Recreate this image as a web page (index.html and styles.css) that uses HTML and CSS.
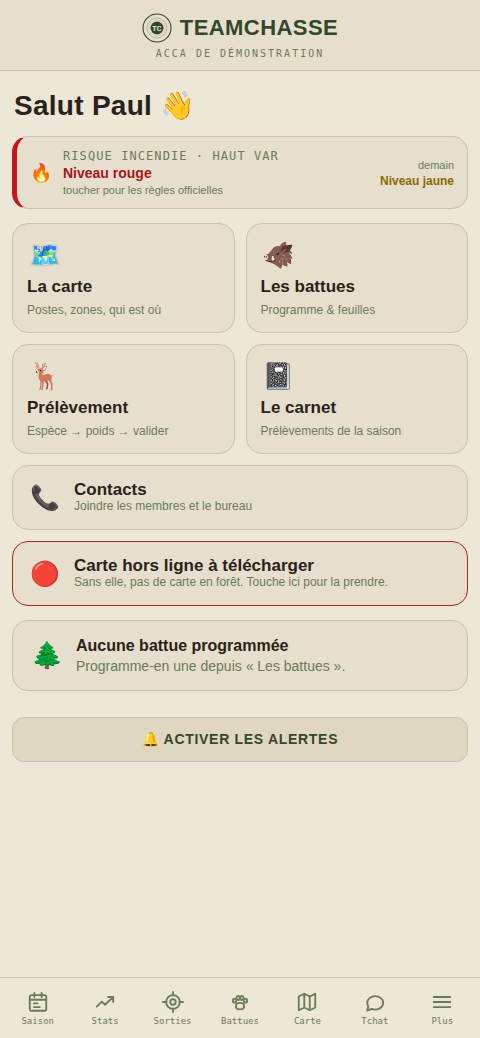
FILE: index.html
```html
<!DOCTYPE html>
<html lang="fr">
<head>
  <meta charset="UTF-8" />
  <meta name="viewport" content="width=device-width, initial-scale=1.0" />
  <title>TeamChasse</title>
  <link rel="stylesheet" href="styles.css">
</head>
<body>
  <header class="topbar">
    <div class="brand">
      <svg class="logo" viewBox="0 0 30 30" fill="none" aria-hidden="true">
        <circle cx="15" cy="15" r="14" stroke="#34472b" stroke-width="1.1" />
        <circle cx="15" cy="15" r="10" stroke="#a3a68d" stroke-width=".7" />
        <circle cx="15" cy="15" r="8" stroke="#cdc4a6" stroke-width=".6" />
        <circle cx="15" cy="15" r="6.5" fill="#34472b" />
        <text x="15" y="17.5" text-anchor="middle" fill="#ede7d8">TC</text>
      </svg>
      <span class="brand-name">TEAMCHASSE</span>
    </div>
    <div class="club">ACCA DE DÉMONSTRATION</div>
  </header>

  <main>
    <h1>Salut Paul 👋</h1>

    <a class="card fire" href="#risque">
      <span class="fire-icon">🔥</span>
      <span class="fire-today">
        <span class="fire-label">RISQUE INCENDIE · HAUT VAR</span>
        <strong>Niveau rouge</strong>
        <small>toucher pour les règles officielles</small>
      </span>
      <span class="fire-next">
        <small>demain</small>
        <strong>Niveau jaune</strong>
      </span>
    </a>

    <div class="tiles">
      <a class="card tile" href="#carte">
        <span class="emoji">🗺️</span>
        <strong>La carte</strong>
        <small>Postes, zones, qui est où</small>
      </a>
      <a class="card tile" href="#battues">
        <span class="emoji">🐗</span>
        <strong>Les battues</strong>
        <small>Programme &amp; feuilles</small>
      </a>
      <a class="card tile" href="#prelevement">
        <span class="emoji">🦌</span>
        <strong>Prélèvement</strong>
        <small>Espèce → poids → valider</small>
      </a>
      <a class="card tile" href="#carnet">
        <span class="emoji">📓</span>
        <strong>Le carnet</strong>
        <small>Prélèvements de la saison</small>
      </a>
      <a class="card tile wide" href="#contacts">
        <span class="emoji">📞</span>
        <span class="text">
          <strong>Contacts</strong>
          <small>Joindre les membres et le bureau</small>
        </span>
      </a>
      <a class="card tile wide offline" href="#hors-ligne">
        <span class="emoji">🔴</span>
        <span class="text">
          <strong>Carte hors ligne à télécharger</strong>
          <small>Sans elle, pas de carte en forêt. Touche ici pour la prendre.</small>
        </span>
      </a>
    </div>

    <section class="card next-hunt">
      <span class="emoji">🌲</span>
      <div>
        <h2>Aucune battue programmée</h2>
        <p>Programme-en une depuis « Les battues ».</p>
      </div>
    </section>

    <button class="alerts" type="button">🔔 ACTIVER LES ALERTES</button>
  </main>

  <nav class="tabs">
    <a href="#saison">
      <svg viewBox="0 0 24 24"><rect x="3" y="4.5" width="18" height="17" rx="2" /><path d="M8 2v4.500M16 2v4.500M3 9.500h18M7.500 13.500h4M7.500 17.500h6.500" /></svg>
      Saison
    </a>
    <a href="#stats">
      <svg viewBox="0 0 24 24"><path d="M3 17l5.500-5.500 3.500 3.500 9-8.500M15.500 6.500H21V12" /></svg>
      Stats
    </a>
    <a href="#sorties">
      <svg viewBox="0 0 24 24"><circle cx="12" cy="12" r="7.5" /><circle cx="12" cy="12" r="3" /><path d="M12 1v4M12 19v4M1 12h4M19 12h4" /></svg>
      Sorties
    </a>
    <a href="#sorties-battues">
      <svg viewBox="0 0 24 24"><ellipse cx="6" cy="10.5" rx="1.8" ry="2.2" /><ellipse cx="10" cy="7.5" rx="1.8" ry="2.2" /><ellipse cx="14" cy="7.5" rx="1.8" ry="2.2" /><ellipse cx="18" cy="10.5" rx="1.8" ry="2.2" /><path d="M12 13c3 0 4.500 1.500 4.500 3.500S15 20 12 20s-4.500-1.500-4.500-3.500S9 13 12 13z" /></svg>
      Battues
    </a>
    <a href="#plan">
      <svg viewBox="0 0 24 24"><path d="M3 6l6-3 6 3 6-3v15l-6 3-6-3-6 3zM9 3v15M15 6v15" /></svg>
      Carte
    </a>
    <a href="#tchat">
      <svg viewBox="0 0 24 24"><path d="M21 12.500a8.500 7.800 0 0 1-8.500 7.800 9 9 0 0 1-4-.8L3.500 21.500l1.200-5A7.500 7.500 0 0 1 3.500 12.500a8.800 7.800 0 0 1 17.500 0z" /></svg>
      Tchat
    </a>
    <a href="#plus">
      <svg viewBox="0 0 24 24"><path d="M3 6.500h18M3 12h18M3 17.500h18" /></svg>
      Plus
    </a>
  </nav>
</body>
</html>
```
FILE: styles.css
```css
:root {
  --bg: #ede7d8;
  --card: #e6dfce;
  --line: #c9c2ac;
  --ink: #2a2118;
  --green: #34472b;
  --muted: #6b7a58;
}
* {
  box-sizing: border-box;
}
body {
  margin: 0;
  min-height: 100vh;
  display: flex;
  flex-direction: column;
  background: var(--bg);
  color: var(--ink);
  font-family: "Liberation Sans", Arial, sans-serif;
}
a {
  color: inherit;
  text-decoration: none;
}
strong, small {
  display: block;
}

.topbar {
  padding: 13px 12px 9px;
  background: var(--card);
  border-bottom: 1px solid var(--line);
  text-align: center;
}
.brand {
  display: flex;
  align-items: center;
  justify-content: center;
  gap: 8px;
  color: var(--green);
}
.logo {
  width: 30px;
  height: 30px;
}
.logo text {
  font: bold 7px "Liberation Sans", sans-serif;
}
.brand-name {
  font-size: 22px;
  font-weight: bold;
  line-height: 30px;
  letter-spacing: 0.02em;
}
.club {
  margin-top: 4px;
  font-family: "DejaVu Sans Mono", monospace;
  font-size: 10px;
  line-height: 14px;
  letter-spacing: 2px;
  color: var(--muted);
}

main {
  flex: 1;
  padding: 18px 12px;
}
h1 {
  margin: 0 2px 14px;
  font-size: 28px;
  line-height: 33px;
  letter-spacing: 0.01em;
}
.card {
  background: var(--card);
  border: 1px solid var(--line);
  border-radius: 16px;
}

.fire {
  display: flex;
  align-items: center;
  gap: 11px;
  padding: 10px 13px 9px;
  margin-bottom: 14px;
  border-left: 5px solid #c8141b;
}
.fire-icon {
  font-size: 18px;
}
.fire-today {
  flex: 1;
}
.fire-label {
  display: block;
  font-family: "DejaVu Sans Mono", monospace;
  font-size: 12px;
  line-height: 18px;
  letter-spacing: 0.09em;
  color: var(--muted);
}
.fire-today strong {
  font-size: 14px;
  line-height: 17px;
  color: #a9151b;
}
.fire small {
  font-size: 11px;
  line-height: 17px;
  color: var(--muted);
}
.fire-next {
  text-align: right;
}
.fire-next strong {
  font-size: 12px;
  line-height: 15px;
  color: #8a6a00;
}

.tiles {
  display: grid;
  grid-template-columns: 1fr 1fr;
  gap: 11px;
}
.tile {
  padding: 14px;
}
.emoji {
  display: block;
  width: 35px;
  font-size: 26px;
  line-height: 35px;
  text-align: center;
}
.tile strong {
  margin-top: 4px;
  font-size: 17px;
  line-height: 20px;
}
.tile small {
  margin-top: 5px;
  font-size: 12px;
  line-height: 16px;
  color: var(--muted);
}
.wide {
  grid-column: 1 / -1;
  display: flex;
  align-items: center;
  gap: 12px;
}
.wide .emoji {
  font-size: 24px;
}
.wide strong, .wide small {
  margin-top: 0;
}
.wide strong {
  line-height: 18px;
}
.wide small {
  line-height: 15px;
}
.offline {
  border-color: #b3261e;
}

.next-hunt {
  display: flex;
  align-items: center;
  gap: 12px;
  margin-top: 14px;
  padding: 14px 16px;
}
.next-hunt h2 {
  margin: 0;
  font-size: 16px;
  line-height: 21px;
}
.next-hunt p {
  margin: 0;
  font-size: 14px;
  line-height: 20px;
  color: var(--muted);
}
.alerts {
  display: block;
  width: 100%;
  margin-top: 26px;
  padding: 11px;
  border: 1px solid var(--line);
  border-radius: 12px;
  background: #dfd7c1;
  color: var(--green);
  font: bold 14px/21px "Liberation Sans", Arial, sans-serif;
  letter-spacing: 0.05em;
}

.tabs {
  position: sticky;
  bottom: 0;
  display: grid;
  grid-template-columns: repeat(7, 1fr);
  padding: 13px 4px 11px;
  background: var(--bg);
  border-top: 1px solid var(--line);
}
.tabs a {
  display: flex;
  flex-direction: column;
  align-items: center;
  gap: 2px;
  font-family: "DejaVu Sans Mono", monospace;
  font-size: 9px;
  line-height: 12px;
  color: var(--muted);
}
.tabs svg {
  width: 22px;
  height: 22px;
  fill: none;
  stroke: currentColor;
  stroke-width: 2;
  stroke-linecap: round;
  stroke-linejoin: round;
}
```
